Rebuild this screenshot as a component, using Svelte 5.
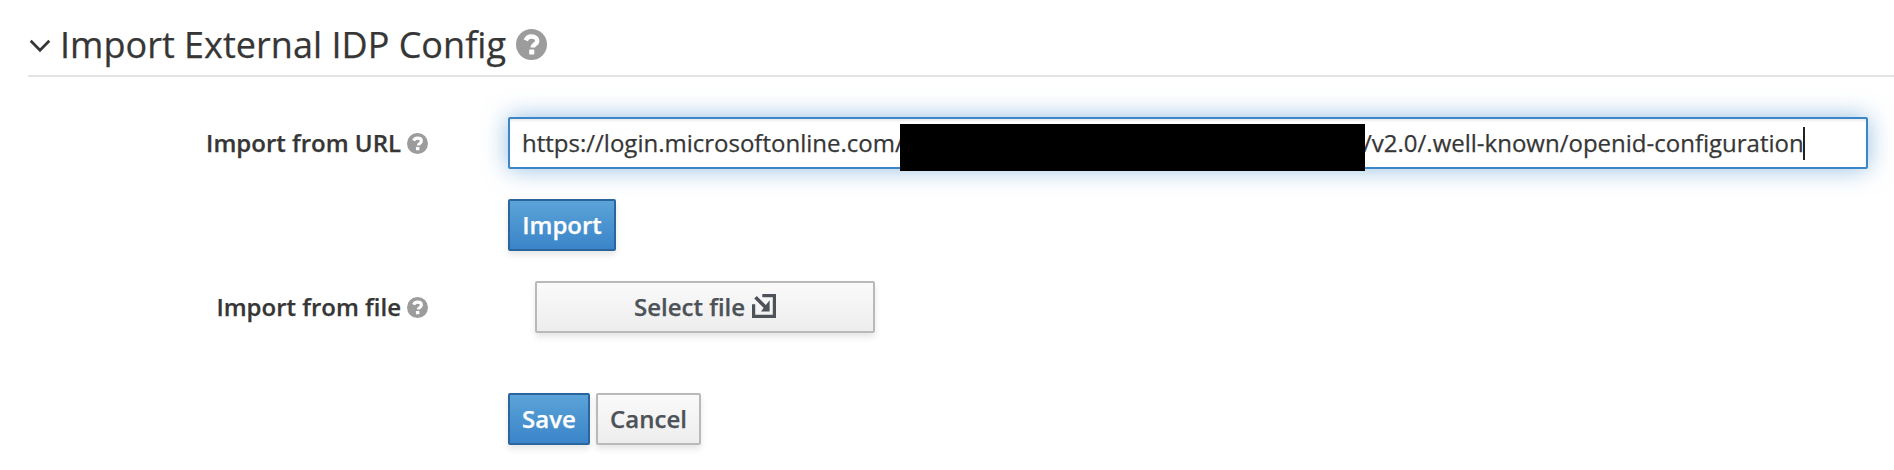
<script>
  const host = 'https://login.microsoftonline.com/';
  const path = '/v2.0/.well-known/openid-configuration';
</script>

{#snippet help(cls)}
  <svg class="help {cls}" viewBox="0 0 20 20" aria-hidden="true">
    <circle cx="10" cy="10" r="10" fill="#9c9c9c" />
    <path d="M6.300 7.300C7 5.600 8.300 4.900 10 4.900c2.200 0 3.700 1.100 3.700 2.800 0 2.300-2.900 2.200-2.900 4.200" fill="none" stroke="#fff" stroke-width="2.900" />
    <rect x="8.500" y="13.300" width="3.300" height="3.100" rx=".3" fill="#fff" />
  </svg>
{/snippet}

<main>
  <h2>
    <svg class="chevron" viewBox="0 0 22 14" aria-hidden="true"><path d="M1.700 1.700 11 11.200 20.300 1.700" fill="none" stroke="#363636" stroke-width="2.700" /></svg>
    <span class="title">Import External IDP Config</span>
    {@render help('large')}
  </h2>
  <form onsubmit={(e) => e.preventDefault()}>
    <div class="row url">
      <div class="label"><span>Import from URL</span>{@render help('')}</div>
      <div class="input"><span class="host">{host}</span><span class="mask"></span><span class="path">{path}</span><span class="caret"></span></div>
    </div>
    <div class="row actions">
      <button class="primary import">Import</button>
    </div>
    <div class="row file">
      <div class="label"><span>Import from file</span>{@render help('')}</div>
      <button class="select"><span>Select file</span>
        <svg viewBox="0 0 24 24" aria-hidden="true">
          <path d="M10.300 1.600H22.400V22.400H1.600V10.200" fill="none" stroke="#4d5258" stroke-width="3.200" />
          <path d="M3.500 3.300 14 13.800" fill="none" stroke="#4d5258" stroke-width="3.600" />
          <path d="M17.600 6.300V17.400H9Z" fill="#4d5258" />
        </svg>
      </button>
    </div>
    <div class="row save">
      <button class="primary save-button">Save</button>
      <button class="cancel">Cancel</button>
    </div>
  </form>
</main>

<style>
  :global(body) { margin: 0; background: #fff; }
  main, button { font-family: "Open Sans", sans-serif; }
  main { height: 470px; overflow: hidden; color: #363636; font-size: 24px; background: #fff; -webkit-text-stroke: .25px currentColor; }
  h2 { display: flex; align-items: center; height: 61px; margin: 0 0 0 28px; padding-top: 14px; border-bottom: 2px solid #e3e3e3; font-size: 36px; font-weight: 400; line-height: 60px; }
  .chevron { width: 22px; height: 14px; margin: 2px 9.5px 0 .5px; }
  .title { width: 456px; white-space: nowrap; letter-spacing: .02px; }
  .help { display: block; width: 21px; height: 21px; flex: none; }
  .large { width: 31px; height: 31px; }
  .row { display: flex; height: 52px; }
  .url { margin-top: 40px; }
  .actions { margin-top: 30px; padding-left: 508px; }
  .file { margin-top: 30px; }
  .save { margin-top: 60px; padding-left: 508px; gap: 6px; }
  .label { display: flex; align-items: center; justify-content: flex-end; gap: 6px; width: 428px; margin-right: 80px; font-weight: 600; white-space: nowrap; }
  .label span, .host, .path { padding-bottom: 2px; }
  .input { display: flex; align-items: center; box-sizing: border-box; width: 1360px; height: 52px; padding-left: 12px; border: 2px solid #3b86c8; border-radius: 2px; background: #fff; box-shadow: inset 0 2px 2px rgba(3,3,3,.075), 0 0 24px rgba(59,134,200,.55); white-space: nowrap; }
  .host { width: 378px; }
  .mask { position: relative; z-index: 1; width: 465px; height: 47px; margin-top: 9px; flex: none; background: #000; }
  .path { width: 440px; margin-left: -2px; }
  .caret { width: 2px; height: 33px; background: #222; }
  button { display: flex; align-items: center; justify-content: center; box-sizing: border-box; height: 52px; margin: 0; padding: 0; border: 2px solid #b9b9b9; border-radius: 2px; background: linear-gradient(#fafafa, #ededed); color: #4d5258; box-shadow: 0 4px 6px rgba(3,3,3,.1); font-size: 24px; font-weight: 600; line-height: 40px; }
  .primary { border-color: #2a669d; background: linear-gradient(#5ba3d8, #3b84c8); color: #fff; }
  .import { width: 108px; }
  .select { width: 340px; margin-left: 27px; gap: 7px; }
  .select svg { width: 24px; height: 24px; margin-top: -3px; }
  .save-button { width: 82px; }
  .cancel { width: 105px; }
</style>
